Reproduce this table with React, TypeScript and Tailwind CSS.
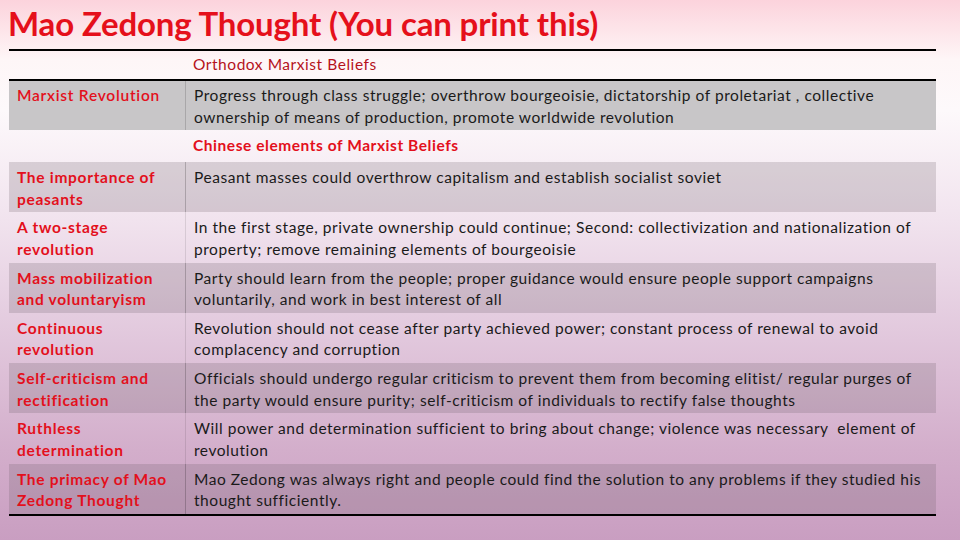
import React from "react";

const rows: { h: React.ReactNode; t: React.ReactNode; shaded: boolean }[] = [
  { h: <>The importance of<br />peasants</>, t: <>Peasant masses could overthrow capitalism and establish socialist soviet</>, shaded: true },
  { h: <>A two-stage<br />revolution</>, t: <>In the first stage, private ownership could continue; Second: collectivization and nationalization of<br />property; remove remaining elements of bourgeoisie</>, shaded: false },
  { h: <>Mass mobilization<br />and voluntaryism</>, t: <>Party should learn from the people; proper guidance would ensure people support campaigns<br />voluntarily, and work in best interest of all</>, shaded: true },
  { h: <>Continuous<br />revolution</>, t: <>Revolution should not cease after party achieved power; constant process of renewal to avoid<br />complacency and corruption</>, shaded: false },
  { h: <>Self-criticism and<br />rectification</>, t: <>Officials should undergo regular criticism to prevent them from becoming elitist/ regular purges of<br />the party would ensure purity; self-criticism of individuals to rectify false thoughts</>, shaded: true },
  { h: <>Ruthless<br />determination</>, t: <>Will power and determination sufficient to bring about change; violence was necessary&nbsp; element of<br />revolution</>, shaded: false },
  { h: <>The primacy of Mao<br />Zedong Thought</>, t: <>Mao Zedong was always right and people could find the solution to any problems if they studied his<br />thought sufficiently.</>, shaded: true },
];

export default function App() {
  return (
    <div
      className="w-[960px] h-[540px] overflow-hidden bg-[linear-gradient(180deg,#fcd3dc_0px,#fef6f7_60px,#fdf9fb_110px,#f1e3ee_220px,#e1c7dc_340px,#d3aecb_450px,#c99ec1_540px)]"
      style={{ fontFamily: "Lato, 'Liberation Sans', sans-serif" }}
    >
      <div className="h-[49px] pl-[8px] pt-[4px]">
        <h1 className="text-[33px] leading-[38px] font-bold text-[#e5101b] tracking-[-0.15px] whitespace-nowrap">
          Mao Zedong Thought (You can print this)
        </h1>
      </div>
      <div className="ml-[9px] w-[927px] text-[15.5px] leading-[21.5px] tracking-[0.55px] text-[#1a1a1a]">
        <div className="border-t-2 border-black grid grid-cols-[176px_1fr] h-[30px]">
          <div />
          <div className="pl-[8px] pt-[3px] text-[#b5121b] whitespace-nowrap">Orthodox Marxist Beliefs</div>
        </div>
        <div className="border-t-2 border-black grid grid-cols-[176px_1fr] h-[51px] bg-[#c8c6c8]">
          <div className="pl-[8px] pt-[4px] text-[#e3101c] font-semibold tracking-[0.75px] whitespace-nowrap">Marxist Revolution</div>
          <div className="pl-[8px] pt-[4px] border-l border-[#a9a7a9] whitespace-nowrap">
            Progress through class struggle; overthrow bourgeoisie, dictatorship of proletariat , collective
            <br />
            ownership of means of production, promote worldwide revolution
          </div>
        </div>
        <div className="grid grid-cols-[176px_1fr] h-[32px]">
          <div />
          <div className="pl-[8px] pt-[5px] text-[#e3101c] font-bold whitespace-nowrap">Chinese elements of Marxist Beliefs</div>
        </div>
        {rows.map((r, i) => (
          <div
            key={i}
            className={`grid grid-cols-[176px_1fr] h-[50.3px] ${r.shaded ? "bg-[#6a5a66]/[0.22]" : ""}`}
          >
            <div className="pl-[8px] pt-[5px] text-[#e3101c] font-bold tracking-[0.7px] whitespace-nowrap">{r.h}</div>
            <div className={`pl-[8px] pt-[5px] whitespace-nowrap border-l ${r.shaded ? "border-black/20" : "border-black/10"}`}>
              {r.t}
            </div>
          </div>
        ))}
        <div className="border-t-2 border-black" />
      </div>
    </div>
  );
}
